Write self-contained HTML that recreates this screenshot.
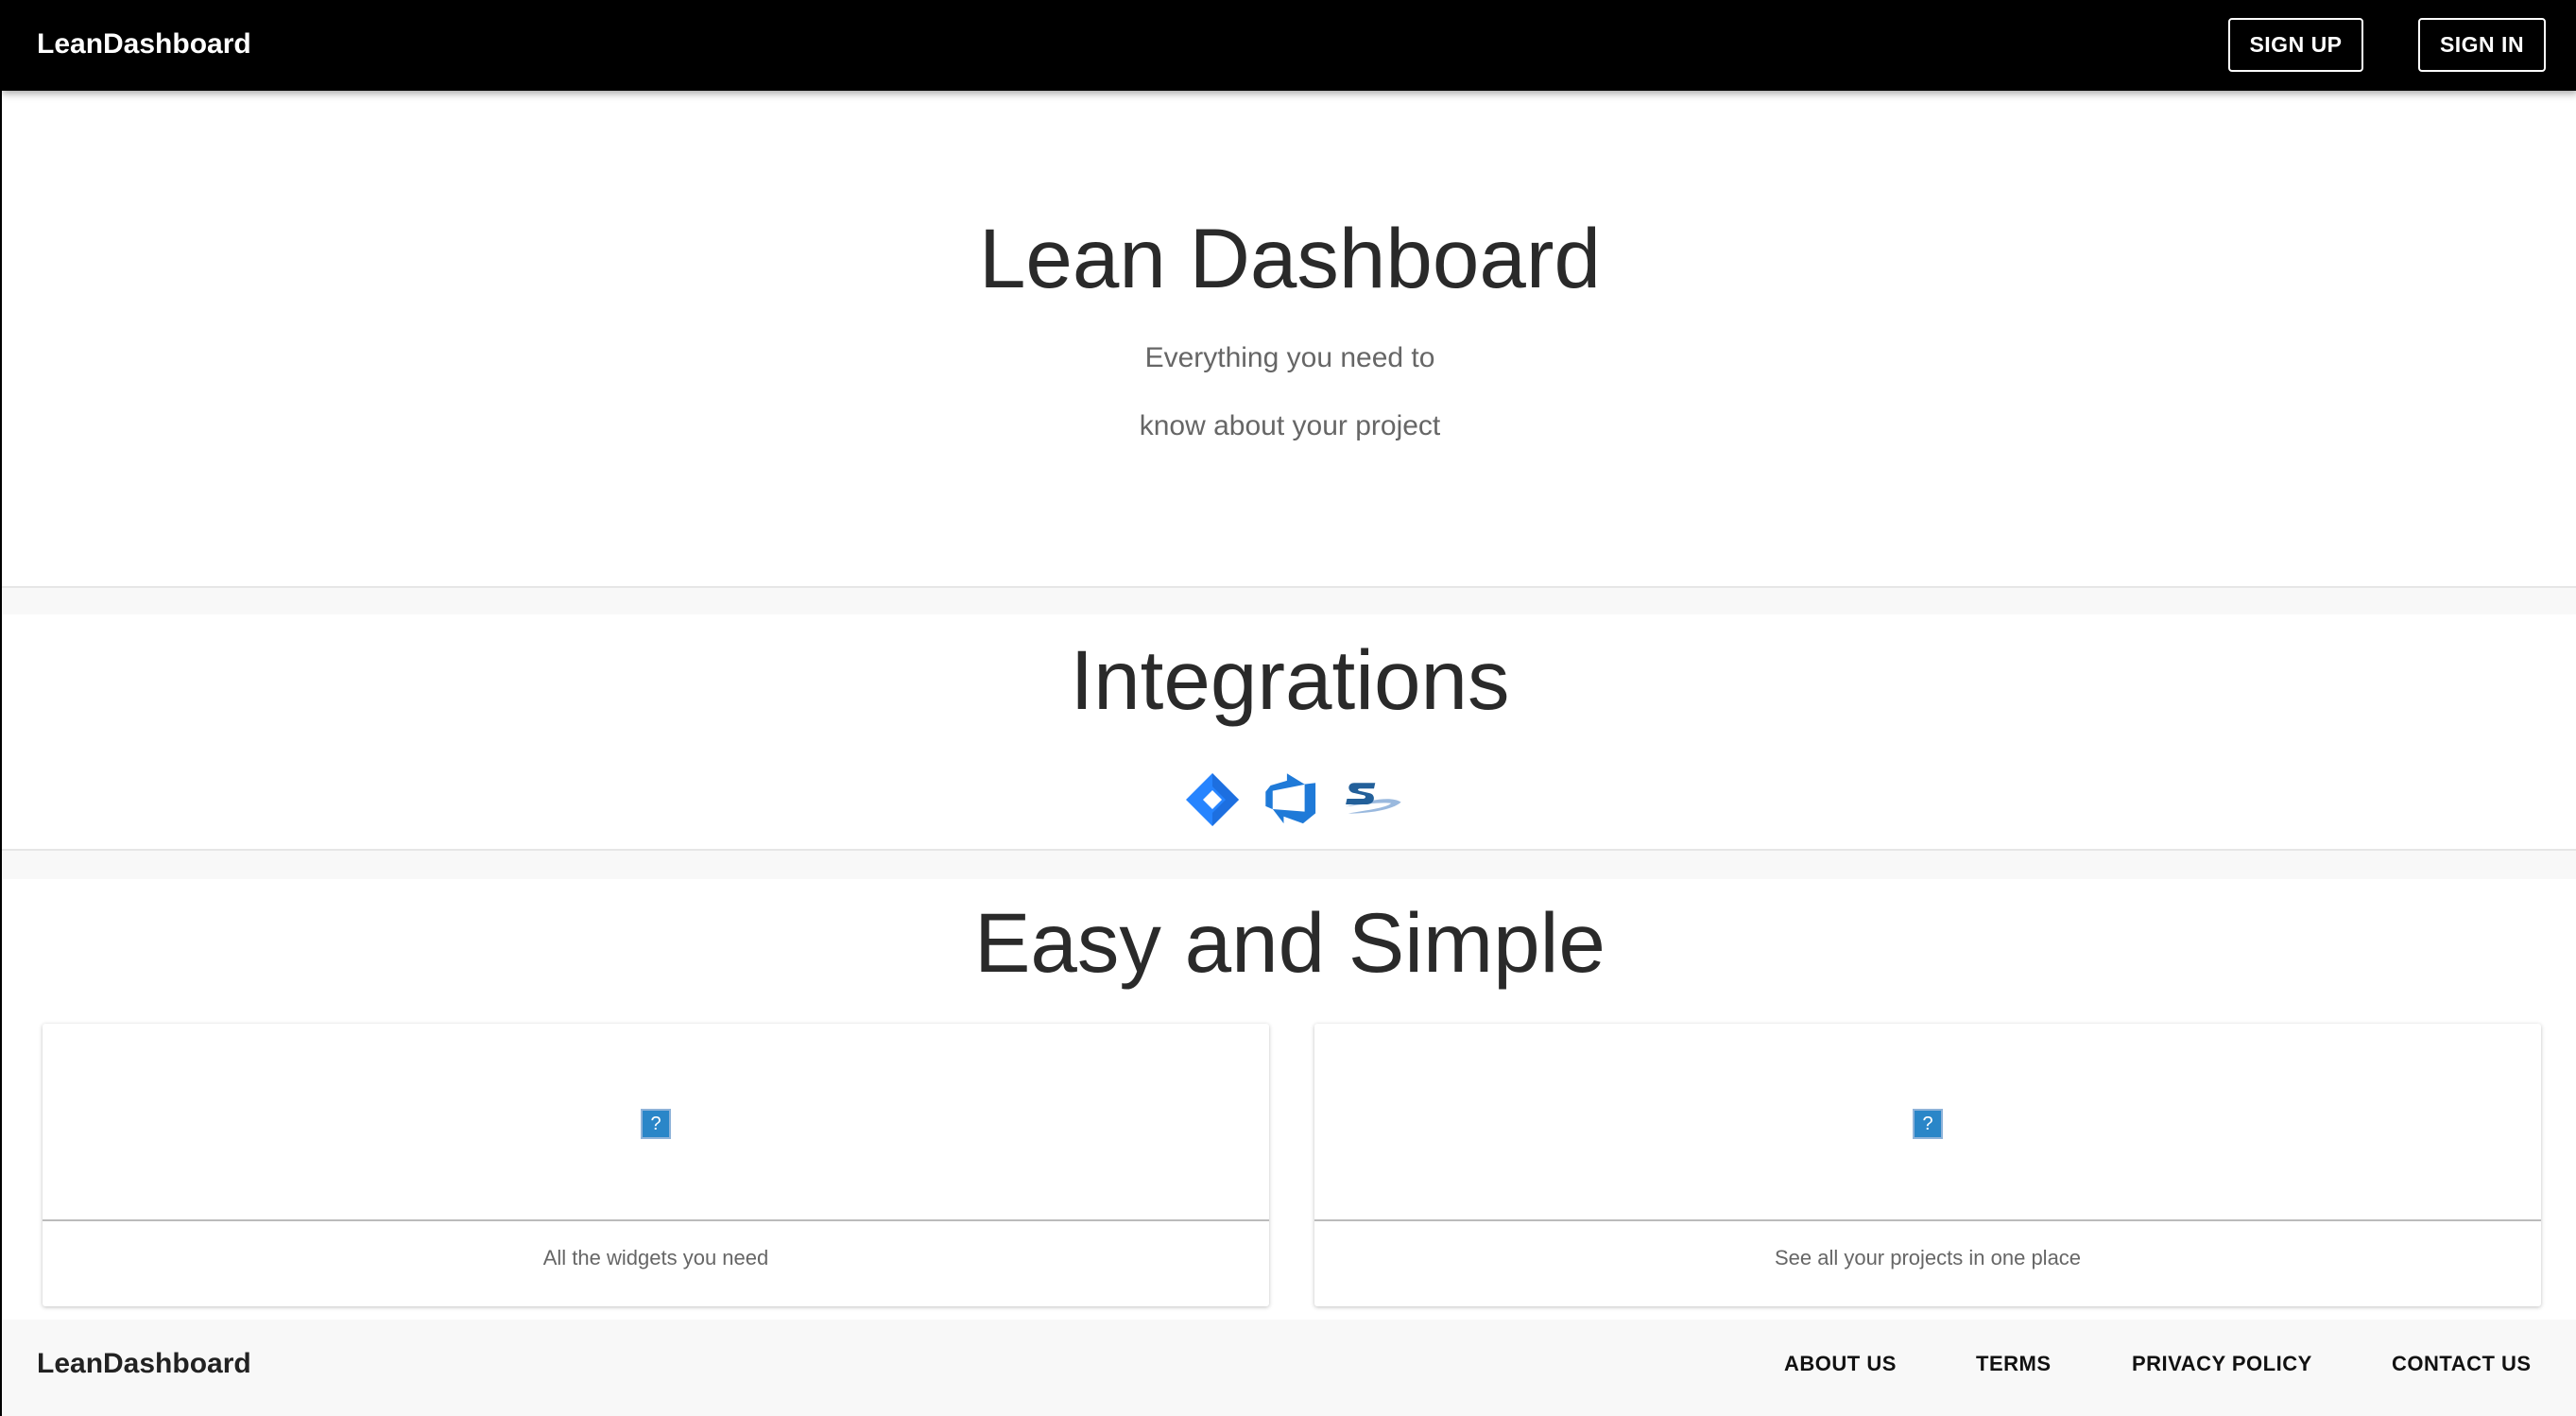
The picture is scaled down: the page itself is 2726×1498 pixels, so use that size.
<!DOCTYPE html>
<html><head><meta charset="utf-8"><style>
*{margin:0;padding:0;box-sizing:border-box}
body{width:2726px;height:1498px;overflow:hidden;background:#fff;font-family:"Liberation Sans",Arial,sans-serif;position:relative;border-left:2px solid #000}
.abs{position:absolute}
.nav{left:0;top:0;width:2726px;height:96px;background:#000;box-shadow:0 3px 8px rgba(0,0,0,.35)}
.logo{font-weight:bold;font-size:30px;color:#fff;left:37px;top:30px}
.btn{border:2px solid #fff;border-radius:4px;color:#fff;font-weight:bold;font-size:23px;display:flex;align-items:center;justify-content:center;letter-spacing:.5px}
.h{width:2726px;left:0;text-align:center;font-weight:normal;font-size:89px;color:#2a2a2a}
.sub{width:2726px;left:0;text-align:center;font-size:30px;color:#666}
.band{left:0;width:2726px;background:#f8f8f8;border-top:2px solid #e6e6e6}
.card{background:#fff;box-shadow:0 1px 4px rgba(0,0,0,.25);border-radius:3px}
.card .img{height:209px;border-bottom:2px solid #bbb;position:relative}
.card .cap{text-align:center;font-size:22px;color:#666;padding-top:26px}
.q{position:absolute;left:50%;top:90px;margin-left:-16px;width:32px;height:32px;border:2px solid #8fb3d9;background:#2a86c8;color:#fff;font-size:20px;text-align:center;line-height:28px}
.foot{left:0;top:1396px;width:2726px;height:102px;background:#f8f8f8}
.fl{font-weight:bold;font-size:22px;color:#111;top:1430px;letter-spacing:.5px}
</style></head><body>
<div class="abs nav"></div>
<div class="abs logo">LeanDashboard</div>
<div class="abs btn" style="left:2356px;top:19px;width:143px;height:57px">SIGN UP</div>
<div class="abs btn" style="left:2557px;top:19px;width:135px;height:57px">SIGN IN</div>

<div class="abs h" style="top:222px">Lean Dashboard</div>
<div class="abs sub" style="top:362px">Everything you need to</div>
<div class="abs sub" style="top:434px">know about your project</div>

<div class="abs band" style="top:620px;height:30px"></div>
<div class="abs h" style="top:668px">Integrations</div>
<svg class="abs" style="left:1250px;top:815px" width="240" height="60" viewBox="0 0 240 60">
<path d="M31 3 L59 31 L31 59 L3 31Z" fill="#2684ff"/>
<path d="M31 3 L59 31 L31 59 L31 45 L45 31 L31 17Z" fill="#1d6fe0"/>
<path d="M31 21 L41 31 L31 41 L21 31Z" fill="#fff"/>
<g transform="translate(84,0) scale(3.3)" fill="#1f7ad8"><path d="M17 4v9.74l-4 3.28-6.2-2.26V17l-3.51-4.59 10.23.8V4.44zm-3.41.49L7.85 1v2.29L2.58 4.84 1 6.87v4.61l2.26 1V6.57z"/></g>
<g transform="translate(-45,-6) scale(1.3,1.2)">
<path d="M167 37 C190 30 205 28 212 33 C205 40 185 43 169 43 C185 40 200 38 204 34 C198 33 185 34 167 37Z" fill="#9ab9de"/>
<path d="M191 16 L174 16 C168 16 168 24 174 25 L182 27 C184 28 183 30 181 30 L168 30 L167 35 L184 35 C191 35 192 26 186 25 L178 23 C176 22 177 21 179 21 L190 21Z" fill="#23609a"/>
</g>
</svg>

<div class="abs band" style="top:898px;height:32px"></div>
<div class="abs h" style="top:946px">Easy and Simple</div>

<div class="abs card" style="left:43px;top:1083px;width:1298px;height:299px"><div class="img"><div class="q">?</div></div><div class="cap">All the widgets you need</div></div>
<div class="abs card" style="left:1389px;top:1083px;width:1298px;height:299px"><div class="img"><div class="q">?</div></div><div class="cap">See all your projects in one place</div></div>

<div class="abs foot"></div>
<div class="abs" style="left:37px;top:1426px;font-weight:bold;font-size:30px;color:#222">LeanDashboard</div>
<div class="abs fl" style="left:1886px">ABOUT US</div>
<div class="abs fl" style="left:2089px">TERMS</div>
<div class="abs fl" style="left:2254px">PRIVACY POLICY</div>
<div class="abs fl" style="left:2529px">CONTACT US</div>
</body></html>
